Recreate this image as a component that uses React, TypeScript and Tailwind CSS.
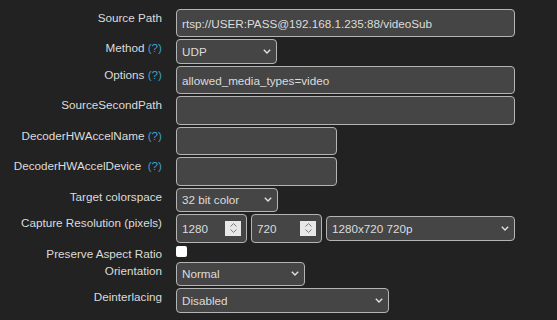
import React from "react";

const font = "font-['Liberation_Sans',Arial,sans-serif]";

function Help() {
  return <span className="text-[#3c9fc8]">(?)</span>;
}

function Label({ children }: { children: React.ReactNode }) {
  return (
    <div className="text-right pt-[2px] leading-[normal] whitespace-pre text-[#dcdcdc]">
      {children}
    </div>
  );
}

function TextInput({ value = "", width }: { value?: string; width: string }) {
  return (
    <input
      readOnly
      value={value}
      className={`${width} h-[28.4px] rounded-[4px] border border-[#b4b4b4] bg-[#454545] pl-[5px] text-[#dcdcdc] outline-none`}
    />
  );
}

function Chevron({ className = "" }: { className?: string }) {
  return (
    <svg width="8" height="5" viewBox="0 0 8 5" className={className}>
      <path d="M0.8 0.8 L4 4 L7.2 0.8" fill="none" stroke="#e0e0e0" strokeWidth="1.4" />
    </svg>
  );
}

function Select({ value, width }: { value: string; width: string }) {
  return (
    <div
      className={`${width} h-[24.6px] flex items-center justify-between rounded-[4px] border border-[#b4b4b4] bg-[#454545] pl-[5px] pr-[5px] text-[#dcdcdc]`}
    >
      <span>{value}</span>
      <Chevron />
    </div>
  );
}

function NumberInput({ value }: { value: string }) {
  return (
    <div className="w-[71px] h-[28.4px] flex items-center rounded-[4px] border border-[#b4b4b4] bg-[#454545] pl-[5px] pr-[5px]">
      <input readOnly value={value} className="min-w-0 flex-1 bg-transparent text-[#dcdcdc] outline-none" />
      <span className="flex h-[15px] w-[16px] flex-col items-center justify-center gap-[2px] bg-[#e8e8e8]">
        <svg width="7" height="4" viewBox="0 0 7 4">
          <path d="M0.5 3.5 L3.5 0.6 L6.5 3.5" fill="none" stroke="#7a7a7a" strokeWidth="1" />
        </svg>
        <svg width="7" height="4" viewBox="0 0 7 4">
          <path d="M0.5 0.5 L3.5 3.4 L6.5 0.5" fill="none" stroke="#7a7a7a" strokeWidth="1" />
        </svg>
      </span>
    </div>
  );
}

export default function App() {
  return (
    <div className={`min-h-screen w-full bg-[#222222] pt-[9px] text-[11.7px] ${font}`}>
      <div className="grid grid-cols-[162px_1fr] gap-x-[14px] gap-y-[2px]">
        <Label>Source Path</Label>
        <TextInput value="rtsp://USER:PASS@192.168.1.235:88/videoSub" width="w-[339px]" />

        <Label>
          Method <Help />
        </Label>
        <Select value="UDP" width="w-[101px]" />

        <Label>
          Options <Help />
        </Label>
        <TextInput value="allowed_media_types=video" width="w-[339px]" />

        <Label>SourceSecondPath</Label>
        <TextInput width="w-[339px]" />

        <Label>
          DecoderHWAccelName <Help />
        </Label>
        <TextInput width="w-[161px]" />

        <Label>
          DecoderHWAccelDevice  <Help />
        </Label>
        <TextInput width="w-[161px]" />

        <Label>Target colorspace</Label>
        <Select value="32 bit color" width="w-[102px]" />

        <Label>Capture Resolution (pixels)</Label>
        <div className="flex items-center gap-[4px]">
          <NumberInput value="1280" />
          <NumberInput value="720" />
          <Select value="1280x720 720p" width="w-[189px]" />
        </div>

        <Label>Preserve Aspect Ratio</Label>
        <div className="h-[14px] pt-[1px]">
          <input type="checkbox" className="block h-[11px] w-[11px] appearance-none rounded-[2px] bg-white" />
        </div>

        <Label>Orientation</Label>
        <Select value="Normal" width="w-[129px]" />

        <Label>Deinterlacing</Label>
        <Select value="Disabled" width="w-[213px]" />
      </div>
    </div>
  );
}
